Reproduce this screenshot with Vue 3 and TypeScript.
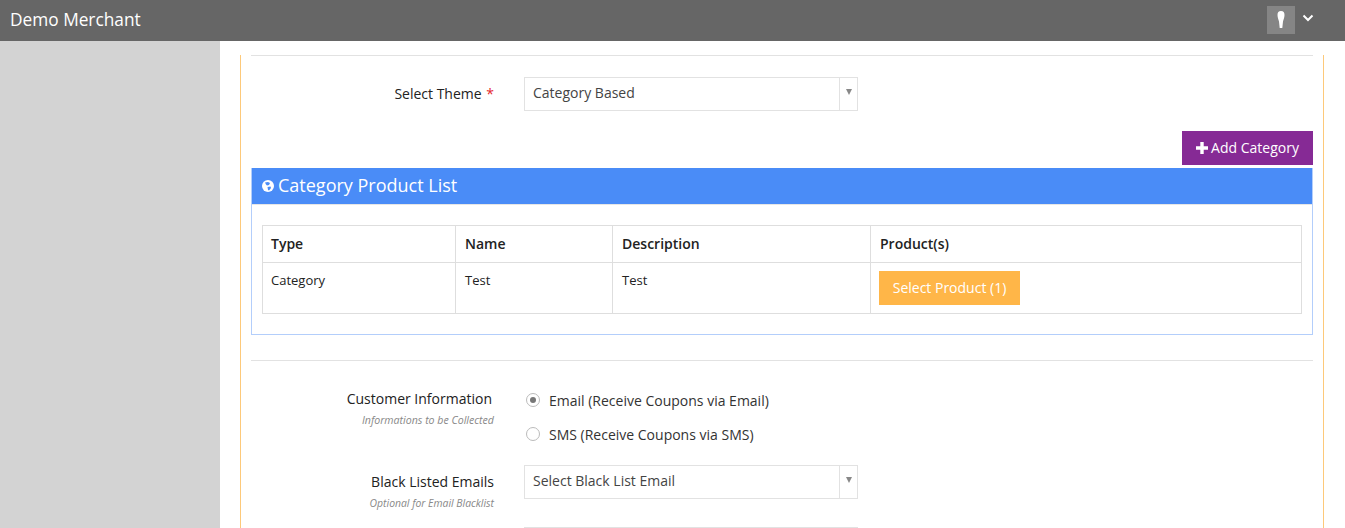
<script setup lang="ts">
const columns: string[] = ['Type', 'Name', 'Description', 'Product(s)']
</script>

<template>
  <div class="page">
    <header class="topbar">
      <span class="brand">Demo Merchant</span>
      <div class="user">
        <span class="avatar">
          <svg width="28" height="28" viewBox="0 0 28 28"><path d="M10.500 9C10.500 6.500 11.500 5 14 5s3.500 1.500 3.500 4c0 2.500-1 4.500-1.500 6.500l-.7 6.500h-2.600l-.7-6.500C11.500 13.500 10.500 11.500 10.500 9z" fill="#fff"/></svg>
        </span>
        <svg class="chev" width="12" height="8" viewBox="0 0 12 8"><path d="M1.500 1.500 6 6l4.500-4.500" fill="none" stroke="#fff" stroke-width="2"/></svg>
      </div>
    </header>
    <div class="body">
      <aside class="sidebar"></aside>
      <main class="main">
        <div class="card">
          <hr class="rule first" />
          <div class="row theme">
            <label class="label">Select Theme <span class="req">*</span></label>
            <div class="select">
              <span>Category Based</span>
              <span class="arrow"><i></i></span>
            </div>
          </div>
          <div class="actions">
            <button class="btn add">
              <svg width="12" height="12" viewBox="0 0 12 12"><path d="M4.300 0h3.400v4.300H12v3.400H7.700V12H4.300V7.700H0V4.300h4.300z" fill="#fff"/></svg>
              <span>Add Category</span>
            </button>
          </div>
          <section class="panel">
            <div class="panel-head">
              <svg width="12" height="12" viewBox="0 0 12 12"><circle cx="6" cy="6" r="6" fill="#fff"/><path d="M3 2.500 6 2l2 1-1 2-2 .5L4 4.500zM5.500 7l3-.5L9 8l-2 2.500L6 10z" fill="#4a8cf7"/></svg>
              <span>Category Product List</span>
            </div>
            <div class="panel-body">
              <table class="table">
                <colgroup>
                  <col class="c1" /><col class="c2" /><col class="c3" /><col />
                </colgroup>
                <thead>
                  <tr><th v-for="c in columns" :key="c">{{ c }}</th></tr>
                </thead>
                <tbody>
                  <tr>
                    <td>Category</td>
                    <td>Test</td>
                    <td>Test</td>
                    <td><button class="btn product">Select Product (1)</button></td>
                  </tr>
                </tbody>
              </table>
            </div>
          </section>
          <hr class="rule second" />
          <div class="row customer">
            <div class="label-block">
              <div class="label">Customer Information</div>
              <div class="hint">Informations to be Collected</div>
            </div>
            <div class="radios">
              <div class="radio-row"><span class="radio on"></span>Email (Receive Coupons via Email)</div>
              <div class="radio-row"><span class="radio"></span>SMS (Receive Coupons via SMS)</div>
            </div>
          </div>
          <div class="row black">
            <div class="label-block">
              <div class="label">Black Listed Emails</div>
              <div class="hint">Optional for Email Blacklist</div>
            </div>
            <div class="select">
              <span>Select Black List Email</span>
              <span class="arrow"><i></i></span>
            </div>
          </div>
          <div class="row next">
            <div class="select"></div>
          </div>
        </div>
      </main>
    </div>
  </div>
</template>

<style>
html, body { margin: 0; background: #fff; }
</style>

<style scoped>
.page {
  height: 528px;
  overflow: hidden;
  display: flex;
  flex-direction: column;
  font-family: "Open Sans", sans-serif;
  font-size: 14px;
  color: #222;
}
.topbar {
  height: 41px;
  flex: none;
  background: #666;
  display: flex;
  justify-content: space-between;
  align-items: flex-start;
  padding: 0 31px 0 10px;
  box-sizing: border-box;
}
.brand { color: #fff; font-size: 17.3px; line-height: 40px; }
.user { display: flex; align-items: flex-start; gap: 7px; padding-top: 6px; }
.avatar { width: 28px; height: 28px; background: #858585; display: block; }
.avatar svg { display: block; }
.chev { margin-top: 8px; }
.body { flex: 1; display: flex; min-height: 0; }
.sidebar { width: 220px; flex: none; background: #d3d3d3; }
.main { flex: 1; background: #fff; padding: 0 21px 0 20px; min-width: 0; }
.card {
  border-left: 1px solid #fdc97a;
  border-right: 1px solid #fdc97a;
  padding: 0 10px;
  height: 600px;
}
.rule { border: 0; border-top: 1px solid #e2e2e2; margin: 0; }
.rule.first { margin-top: 14px; }
.rule.second { margin-top: 25px; }
.row { display: flex; }
.theme { margin-top: 21px; }
.label { width: 243px; text-align: right; line-height: 34px; color: #222; }
.theme .label { line-height: 33px; }
.req { color: #e4252b; margin-left: 1px; }
.select {
  margin-left: 30px;
  width: 334px;
  height: 34px;
  box-sizing: border-box;
  border: 1px solid #e2e2e2;
  display: flex;
  justify-content: space-between;
  align-items: center;
  padding-left: 8px;
  color: #444;
  line-height: 28px;
}
.select > span:first-child { margin-top: -2px; }
.arrow {
  width: 17px;
  height: 32px;
  border-left: 1px solid #e2e2e2;
  display: flex;
  align-items: center;
  justify-content: center;
  margin-top: 0;
}
.arrow i {
  display: block;
  width: 0;
  height: 0;
  border-left: 3.5px solid transparent;
  border-right: 3.500px solid transparent;
  border-top: 6px solid #888;
  margin-top: -4px;
}
.actions { display: flex; justify-content: flex-end; margin-top: 20px; }
.btn {
  border: 0;
  font: inherit;
  color: #fff;
  height: 34px;
  padding: 0;
  display: inline-flex;
  align-items: center;
  justify-content: center;
}
.add { width: 131px; background: #862a95; gap: 3px; }
.add span { margin-top: -2px; }
.panel {
  margin-top: 3px;
  border: 1px solid #b3cefb;
  border-top: 0;
  height: 167px;
  box-sizing: border-box;
}
.panel-head {
  height: 36px;
  box-sizing: content-box;
  background: #4a8cf7;
  border-bottom: 1px solid #e6e6e6;
  color: #fff;
  font-size: 18px;
  line-height: 34px;
  display: flex;
  align-items: center;
  gap: 4px;
  padding-left: 10px;
}
.panel-head span { margin-top: -2px; }
.panel-body { padding: 20px 10px; }
.table {
  width: 1040px;
  border-collapse: collapse;
  table-layout: fixed;
}
.c1 { width: 193px; }
.c2 { width: 157px; }
.c3 { width: 258px; }
th, td {
  border: 1px solid #dedede;
  text-align: left;
  vertical-align: top;
  padding: 8px;
}
th:not(:first-child), td:not(:first-child) { padding-left: 9px; }
th { height: 36px; box-sizing: border-box; font-weight: 600; color: #222; line-height: 20px; }
td { height: 51px; box-sizing: border-box; font-size: 13px; line-height: 18px; color: #222; }
td:last-child { padding-left: 8px; }
.product {
  width: 141px;
  background: #ffb648;
  font-size: 14px;
  vertical-align: top;
}
.customer { margin-top: 25px; height: 76px; }
.label-block { width: 243px; text-align: right; padding-top: 1px; }
.label-block .label { width: auto; line-height: 24px; }
.customer .label { padding-right: 2px; }
.hint { font-size: 10.6px; font-style: italic; color: #888; line-height: 18px; margin-top: 0; }
.radios { margin-left: 32px; margin-top: -3px; }
.radio-row {
  display: flex;
  align-items: center;
  gap: 9px;
  height: 34px;
  color: #333;
}
.radio {
  width: 14px;
  height: 14px;
  box-sizing: border-box;
  border: 1px solid #bbb;
  border-radius: 50%;
  background: #fff;
  position: relative;
}
.radio.on::after {
  content: "";
  position: absolute;
  inset: 3px;
  border-radius: 50%;
  background: #777;
}
.black { margin-top: 3px; height: 62px; }
.black .select { margin-left: 30px; }
.black .label-block { padding-top: 0; }
.black .label-block .label { line-height: 34px; }
.black .hint { line-height: 12px; margin-top: -2px; font-size: 10.4px; }
.next .select { margin-left: 273px; }
</style>
